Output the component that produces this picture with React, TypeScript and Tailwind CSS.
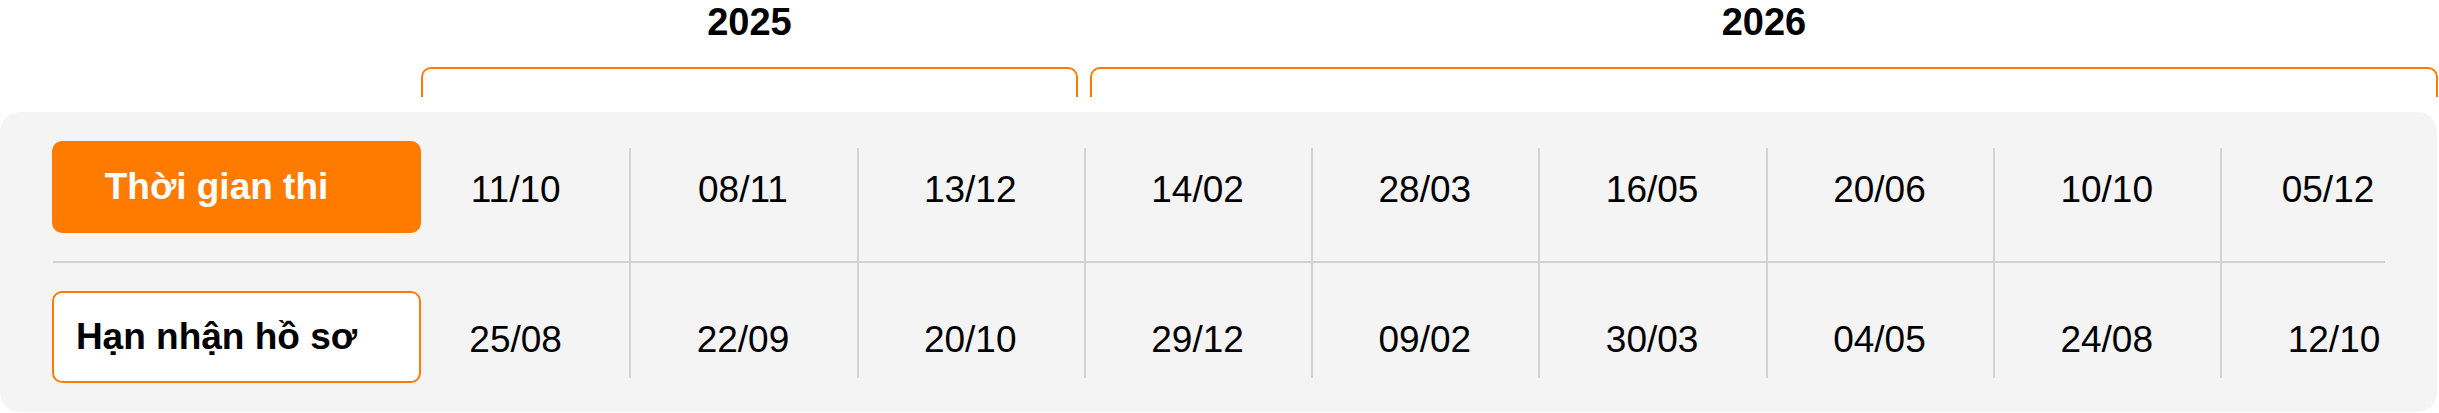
import React from 'react';

const examDates = ['11/10', '08/11', '13/12', '14/02', '28/03', '16/05', '20/06', '10/10', '05/12'];
const deadlineDates = ['25/08', '22/09', '20/10', '29/12', '09/02', '30/03', '04/05', '24/08', '12/10'];

// grid column for each date (col 1 holds the labels)
const colStart = [
    'col-start-2',
    'col-start-3',
    'col-start-4',
    'col-start-5',
    'col-start-6',
    'col-start-7',
    'col-start-8',
    'col-start-9',
    'col-start-10',
];

const YearGroup: React.FC<{ year: string; width: string }> = ({ year, width }) => (
    <div className={`flex flex-col items-center justify-between h-[97px] ${width}`}>
        <div className="pt-[3px] text-[38px] leading-none font-bold">{year}</div>
        <div className="w-full h-[30px] border-2 border-b-0 border-[#ff7b00] rounded-t-[10px]" />
    </div>
);

export default function App() {
    return (
        <div className="w-[2439px] h-[413px] bg-white text-black font-['Liberation_Sans',Arial,sans-serif]">
            {/* Year brackets */}
            <div className="flex h-[112px] pl-[421px] gap-[12px]">
                <YearGroup year="2025" width="w-[657px]" />
                <YearGroup year="2026" width="w-[1348px]" />
            </div>

            {/* Schedule panel */}
            <div className="w-[2437px] h-[300px] rounded-[20px] bg-[#f4f4f4] pl-[52px] pt-[29px]">
                <div className="grid grid-cols-[350px_repeat(9,227.3px)] grid-rows-[92px_58px_92px]">
                    {/* column separators */}
                    {colStart.slice(1).map(c => (
                        <div key={`sep-${c}`} className={`${c} row-start-1 row-end-4 justify-self-start mt-[7px] mb-[5px] w-[2px] bg-[#d2d2d2]`} />
                    ))}

                    <div className="col-start-1 row-start-1 w-[369px] h-[92px] rounded-[10px] bg-[#ff7b00] flex items-center justify-center pr-[40px] text-white text-[37px] font-bold">
                        Thời gian thi
                    </div>
                    {examDates.map((d, i) => (
                        <div key={`e-${i}`} className={`${colStart[i]} row-start-1 flex items-center justify-center pt-[5px] text-[37px] ${i === 8 ? 'pr-[12px]' : ''}`}>
                            {d}
                        </div>
                    ))}

                    <div className="col-start-1 col-end-11 row-start-2 self-center ml-[1px] w-[2332px] h-[2px] bg-[#d2d2d2]" />

                    <div className="col-start-1 row-start-3 w-[369px] h-[92px] rounded-[10px] bg-white border-2 border-[#ff7b00] flex items-center justify-center pr-[40px] text-[37px] font-bold">
                        Hạn nhận hồ sơ
                    </div>
                    {deadlineDates.map((d, i) => (
                        <div key={`d-${i}`} className={`${colStart[i]} row-start-3 flex items-center justify-center pt-[5px] text-[37px]`}>
                            {d}
                        </div>
                    ))}
                </div>
            </div>
        </div>
    );
}
